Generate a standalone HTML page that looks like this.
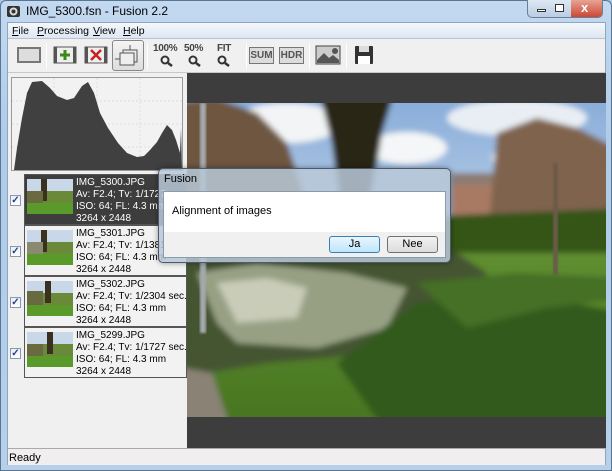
<!DOCTYPE html>
<html><head><style>
*{margin:0;padding:0;box-sizing:border-box}
body{width:612px;height:471px;overflow:hidden;background:#a9c7e6;font-family:"Liberation Sans",sans-serif;font-size:11px;color:#000;position:relative}
.abs{position:absolute}
#frame{left:0;top:0;width:612px;height:471px;background:linear-gradient(#c3d9f0,#aecbe9 30%,#b6d0ea);border:1px solid #5a7590;border-radius:6px 6px 0 0}
#title{left:26px;top:4px;font-size:12px;color:#000}
#client{left:7px;top:22px;width:599px;height:443px;background:#f0f0f0;border:1px solid #8ea6bf}
#menu{left:0;top:0;width:597px;height:16px;background:linear-gradient(#f5f8fc,#dde6f2);border-bottom:1px solid #b6c3d2}
#menu span{position:absolute;top:2px;font-size:10.5px}
#tb{left:0;top:16px;width:597px;height:34px;background:#f0f0f0;border-bottom:1px solid #c8c8c8}
.sep{position:absolute;top:4px;width:1px;height:26px;background:#c0c0c0;border-right:1px solid #fff}
.btn{position:absolute}
.ztxt{position:absolute;font-size:10px;font-weight:bold;color:#444;letter-spacing:-.3px}
.box{position:absolute;border:1px solid #777;background:#dcdcdc;font-size:10px;font-weight:bold;color:#555;text-align:center;line-height:15px}
#hist{left:3px;top:54px;width:172px;height:94px;border:1px solid #9a9a9a;background:#f2f2f2}
.item{position:absolute;left:16px;width:163px;height:51px;border:1px solid #555;background:#f2f2f2}
.item.sel{background:#3d3d3d;color:#fff}
.item .th{position:absolute;left:2px;top:4px;width:46px;height:35px}
.item .tx{position:absolute;left:51px;top:2px;line-height:12px;font-size:10px;white-space:nowrap;overflow:hidden;width:110px}
.cb{position:absolute;left:2px;width:11px;height:11px;border:1px solid #8a99ab;background:linear-gradient(#e8eef5,#fff);font-size:10px;line-height:9px;text-align:center;color:#2a3f8f;font-weight:bold}
#view{left:179px;top:50px;width:419px;height:375px;background:#3d3d3d}
#status{left:0;top:425px;width:597px;height:17px;background:#f0eeee;border-top:1px solid #aaa}
#dlg{left:158px;top:168px;width:293px;height:95px;border:1px solid #4a5a6a;border-radius:5px;background:rgba(185,200,215,.85);box-shadow:0 0 6px rgba(0,0,0,.4)}
</style></head><body>
<div id="frame" class="abs"></div>
<svg class="abs" style="left:6px;top:4px" width="15" height="15" viewBox="0 0 15 15"><rect x="1" y="2" width="13" height="11" rx="2" fill="#333"/><circle cx="7.5" cy="7.5" r="4" fill="#ddd"/><circle cx="7.5" cy="7.5" r="2" fill="#333"/></svg>
<div id="title" class="abs">IMG_5300.fsn - Fusion 2.2</div>
<div class="abs" style="left:527px;top:0;width:76px;height:18px;border:1px solid #6b7f96;border-top:none;border-radius:0 0 5px 5px;background:linear-gradient(#dde8f4,#b9cde3);overflow:hidden">
<div class="abs" style="left:43px;top:0;width:33px;height:18px;background:linear-gradient(#e8a394,#c8432d)"></div>
<div class="abs" style="left:9px;top:9px;width:9px;height:3px;border:1px solid #333;background:#fff"></div>
<div class="abs" style="left:27px;top:4px;width:9px;height:8px;border:1px solid #333;background:#fff"></div>
<div class="abs" style="left:53px;top:0;color:#fff;font-weight:bold;font-size:13px">x</div>
</div>
<div id="client" class="abs">
<div id="menu" class="abs"><span style="left:4px"><u>F</u>ile</span><span style="left:29px"><u>P</u>rocessing</span><span style="left:85px"><u>V</u>iew</span><span style="left:115px"><u>H</u>elp</span></div>
<div id="tb" class="abs">
<div class="btn" style="left:9px;top:8px;width:24px;height:16px;border:2px solid #777;background:#ddd"></div>
<div class="sep" style="left:38px"></div>
<svg class="btn" style="left:45px;top:6px" width="24" height="20"><rect x="1" y="2" width="22" height="16" fill="#eee" stroke="#555"/><rect x="1" y="2" width="3" height="16" fill="#555"/><rect x="20" y="2" width="3" height="16" fill="#555"/><path d="M12 5v10M7 10h10" stroke="#3a8a1a" stroke-width="3"/></svg>
<svg class="btn" style="left:76px;top:6px" width="24" height="20"><rect x="1" y="2" width="22" height="16" fill="#eee" stroke="#555"/><rect x="1" y="2" width="3" height="16" fill="#555"/><rect x="20" y="2" width="3" height="16" fill="#555"/><path d="M7 5l10 10M17 5L7 15" stroke="#c82020" stroke-width="2.5"/></svg>
<div class="btn" style="left:104px;top:1px;width:32px;height:31px;border:1px solid #888;border-radius:3px;background:linear-gradient(#f4f4f4,#ddd)"><svg width="30" height="29"><rect x="10" y="9" width="14" height="12" fill="none" stroke="#555"/><rect x="7" y="12" width="14" height="12" fill="#eee" stroke="#555"/><path d="M17 4v5M2 18h5" stroke="#555"/></svg></div>
<div class="sep" style="left:139px"></div>
<div class="ztxt" style="left:145px;top:4px">100%</div><svg class="btn" style="left:152px;top:16px" width="14" height="12"><circle cx="5" cy="5" r="3.5" fill="none" stroke="#333" stroke-width="2"/><path d="M8 8l4 3" stroke="#333" stroke-width="2.5"/></svg>
<div class="ztxt" style="left:176px;top:4px">50%</div><svg class="btn" style="left:180px;top:16px" width="14" height="12"><circle cx="5" cy="5" r="3.5" fill="none" stroke="#333" stroke-width="2"/><path d="M8 8l4 3" stroke="#333" stroke-width="2.5"/></svg>
<div class="ztxt" style="left:209px;top:4px">FIT</div><svg class="btn" style="left:209px;top:16px" width="14" height="12"><circle cx="5" cy="5" r="3.5" fill="none" stroke="#333" stroke-width="2"/><path d="M8 8l4 3" stroke="#333" stroke-width="2.5"/></svg>
<div class="sep" style="left:238px"></div>
<div class="box" style="left:241px;top:8px;width:25px;height:17px">SUM</div>
<div class="box" style="left:271px;top:8px;width:25px;height:17px">HDR</div>
<div class="sep" style="left:301px"></div>
<svg class="btn" style="left:307px;top:6px" width="26" height="20"><rect x="1" y="1" width="24" height="18" fill="#ccc" stroke="#444"/><path d="M2 15l7-7 5 5 4-3 6 5v3H2z" fill="#555"/><circle cx="20" cy="6" r="3" fill="#555"/></svg>
<div class="sep" style="left:338px"></div>
<svg class="btn" style="left:346px;top:6px" width="20" height="20"><rect x="1" y="1" width="18" height="18" rx="1" fill="#333"/><rect x="5" y="1" width="10" height="6" fill="#ddd"/><rect x="4" y="11" width="12" height="8" fill="#fff"/></svg>
</div>
<div id="hist" class="abs"><svg width="170" height="92"><g stroke="#ddd" stroke-dasharray="2 2"><path d="M42 0v92M85 0v92M128 0v92M0 23h170M0 46h170M0 69h170"/></g><path d="M2 92L5 70 10 40 15 15 20 4 30 3 38 10 45 18 55 22 62 20 70 8 76 4 82 15 88 35 96 50 106 65 115 75 125 79 132 78 138 72 145 64 150 55 155 47 160 52 164 62 168 75 169 50 170 92Z" fill="#404040"/></svg></div>
<div class="item sel" style="top:151px"><svg class="th" viewBox="0 0 46 35"><rect width="46" height="35" fill="#6a8a3a"/><rect width="46" height="12" fill="#c8d8e8"/><rect x="14" width="6" height="22" fill="#3a3020"/><rect y="12" width="16" height="14" fill="#6a6a40"/><rect y="24" width="46" height="11" fill="#5a9a2a"/></svg><div class="tx">IMG_5300.JPG<br>Av: F2.4; Tv: 1/1727 sec.<br>ISO: 64; FL: 4.3 mm<br>3264 x 2448</div></div>
<div class="cb" style="top:172px">✓</div>
<div class="item" style="top:202px"><svg class="th" viewBox="0 0 46 35"><rect width="46" height="35" fill="#6a8a3a"/><rect width="46" height="12" fill="#c8d8e8"/><rect x="14" width="6" height="22" fill="#3a3020"/><rect y="12" width="16" height="14" fill="#8a8a70"/><rect y="24" width="46" height="11" fill="#5a9a2a"/></svg><div class="tx">IMG_5301.JPG<br>Av: F2.4; Tv: 1/1381 sec.<br>ISO: 64; FL: 4.3 mm<br>3264 x 2448</div></div>
<div class="cb" style="top:223px">✓</div>
<div class="item" style="top:253px"><svg class="th" viewBox="0 0 46 35"><rect width="46" height="35" fill="#6a8a3a"/><rect width="46" height="12" fill="#c8d8e8"/><rect x="18" width="6" height="22" fill="#3a3020"/><rect y="10" width="16" height="16" fill="#6a6a40"/><rect y="24" width="46" height="11" fill="#5a9a2a"/></svg><div class="tx">IMG_5302.JPG<br>Av: F2.4; Tv: 1/2304 sec.<br>ISO: 64; FL: 4.3 mm<br>3264 x 2448</div></div>
<div class="cb" style="top:274px">✓</div>
<div class="item" style="top:304px"><svg class="th" viewBox="0 0 46 35"><rect width="46" height="35" fill="#6a8a3a"/><rect width="46" height="12" fill="#c8d8e8"/><rect x="20" width="6" height="22" fill="#3a3020"/><rect y="12" width="16" height="14" fill="#6a6a40"/><rect y="24" width="46" height="11" fill="#5a9a2a"/></svg><div class="tx">IMG_5299.JPG<br>Av: F2.4; Tv: 1/1727 sec.<br>ISO: 64; FL: 4.3 mm<br>3264 x 2448</div></div>
<div class="cb" style="top:325px">✓</div>
<div id="view" class="abs">
<svg class="abs" style="left:0;top:30px" width="419" height="314" viewBox="0 0 419 314">
<defs><linearGradient id="sky" x1="0" y1="0" x2="0" y2="1"><stop offset="0" stop-color="#7fa6d6"/><stop offset="1" stop-color="#c9d9ec"/></linearGradient>
<linearGradient id="gr" x1="0" y1="0" x2="0" y2="1"><stop offset="0" stop-color="#5f8e30"/><stop offset="1" stop-color="#44701e"/></linearGradient>
<filter id="b" x="-10%" y="-10%" width="120%" height="120%"><feGaussianBlur stdDeviation="3"/></filter>
<filter id="b2"><feGaussianBlur stdDeviation="1"/></filter></defs>
<g filter="url(#b)">
<rect x="-30" y="-30" width="480" height="200" fill="url(#sky)"/>
<ellipse cx="100" cy="20" rx="55" ry="20" fill="#f2f4f6"/><ellipse cx="220" cy="45" rx="40" ry="16" fill="#f4f6f8"/><ellipse cx="330" cy="15" rx="70" ry="18" fill="#e8eef4"/><ellipse cx="330" cy="55" rx="25" ry="12" fill="#eef2f6"/>
<rect x="264" y="73" width="180" height="50" fill="#a97a64"/><rect x="264" y="70" width="180" height="12" fill="#8c7c72"/>
<path d="M-20 0l50-5 40 15 30 30 20 60-140 10z" fill="#6e5640"/>
<path d="M310 30l40-15 40 10 40 20v100H300z" fill="#80644e"/>
<path d="M130 -20h80l-15 50-15 90h-25l-10-80z" fill="#2a2616"/>
<path d="M200 115l240-10v60H200z" fill="#365418"/>
<rect x="-30" y="150" width="480" height="200" fill="url(#gr)"/>
<path d="M-30 130l110-10 100 10 90 20 30 20-20 40-80 40-120 10-60 10h-50z" fill="#445430"/>
<path d="M10 170l60-10 90 10 60 15-20 40-70 20-80-5-20-20z" fill="#98a084"/>
<path d="M30 180l50-5 40 10-10 30-60 5z" fill="#c8ccb8"/>
<path d="M150 260l80-60 100-10 110 20v120H200z" fill="#335a1a"/>
<path d="M230 180l100-10 110 5v20l-80 10-80 20z" fill="#447026"/>
<path d="M-30 260l55 10 20 60h-75z" fill="#8a8274"/>
</g>
<rect x="366" y="60" width="5" height="112" fill="#6a5a48" filter="url(#b2)"/>
<rect x="13" y="0" width="6" height="230" fill="#a4a8ac" filter="url(#b2)"/>
</svg>
</div>
<div id="status" class="abs"><span class="abs" style="left:1px;top:3px">Ready</span></div>
</div>
<div id="dlg" class="abs">
<div class="abs" style="left:5px;top:4px;font-size:11px">Fusion</div>
<div class="abs" style="left:4px;top:22px;width:283px;height:67px;background:#f0f0f0;border:1px solid #8a9aaa">
<div class="abs" style="left:0;top:0;width:281px;height:40px;background:#fff"></div>
<div class="abs" style="left:8px;top:13px;font-size:11px">Alignment of images</div>
<div class="abs" style="left:165px;top:44px;width:51px;height:17px;border:1px solid #3c7fb1;border-radius:3px;background:linear-gradient(#eaf6fd,#bee6fd);text-align:center;line-height:15px">Ja</div>
<div class="abs" style="left:223px;top:44px;width:51px;height:17px;border:1px solid #707070;border-radius:3px;background:linear-gradient(#f2f2f2,#dcdcdc);text-align:center;line-height:15px">Nee</div>
</div>
</div>
</body></html>
